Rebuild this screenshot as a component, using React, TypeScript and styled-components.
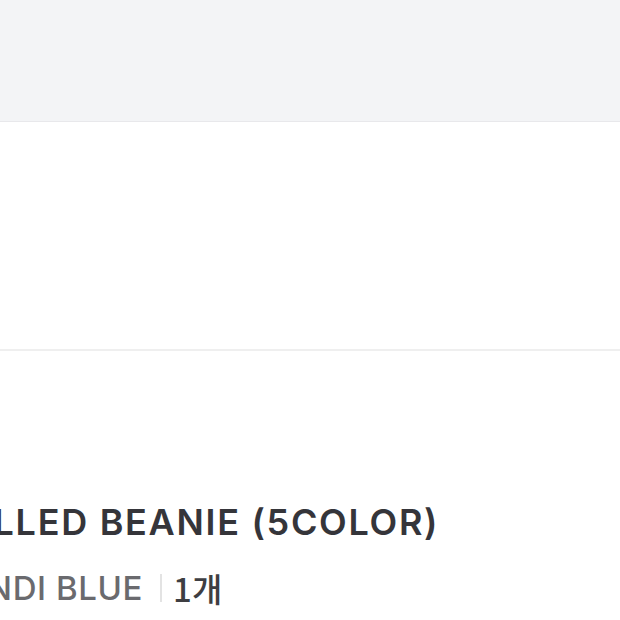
import React from "react";
import styled, { createGlobalStyle } from "styled-components";

const GlobalStyle = createGlobalStyle`
  html, body {
    margin: 0;
    padding: 0;
    background: #ffffff;
    overflow: hidden;
  }
  body {
    font-family: Inter, "Noto Sans CJK KR", sans-serif;
  }
`;

const Page = styled.div`
  width: 620px;
  height: 620px;
  overflow: hidden;
  display: flex;
  flex-direction: column;
`;

const TopBar = styled.header`
  height: 121px;
  flex-shrink: 0;
  background: #f3f4f6;
  border-bottom: 1px solid #e8e8eb;
`;

const BlankSection = styled.section`
  height: 227px;
  flex-shrink: 0;
  background: #ffffff;
  border-bottom: 2px solid #efefef;
`;

const ProductRow = styled.div`
  display: flex;
  align-items: flex-start;
  gap: 24px;
  padding-top: 149px;
  margin-left: -285px;
`;

const Thumb = styled.div`
  width: 200px;
  height: 200px;
  flex-shrink: 0;
  background: #f0f0f0;
`;

const Info = styled.div`
  display: flex;
  flex-direction: column;
  white-space: nowrap;
`;

const Title = styled.div`
  font-size: 36px;
  line-height: 44px;
  font-weight: 600;
  letter-spacing: 1.7px;
  color: #35353a;
`;

const Meta = styled.div`
  display: flex;
  align-items: center;
  margin-top: 24px;
  font-size: 33px;
  line-height: 40px;
  font-weight: 500;
  letter-spacing: 0.6px;
`;

const Option = styled.span`
  color: #6a6a6e;
`;

const Divider = styled.span`
  width: 2px;
  height: 28px;
  background: #e3e3e3;
  margin: 0 11px 0 17px;
`;

const Qty = styled.span`
  font-family: "Noto Sans CJK KR", sans-serif;
  letter-spacing: 0;
  color: #3e3e42;
`;

export default function App() {
  return (
    <>
      <GlobalStyle />
      <Page>
        <TopBar />
        <BlankSection />
        <ProductRow>
          <Thumb />
          <Info>
            <Title>ROLLED BEANIE (5COLOR)</Title>
            <Meta>
              <Option>CANDI BLUE</Option>
              <Divider />
              <Qty>1개</Qty>
            </Meta>
          </Info>
        </ProductRow>
      </Page>
    </>
  );
}
